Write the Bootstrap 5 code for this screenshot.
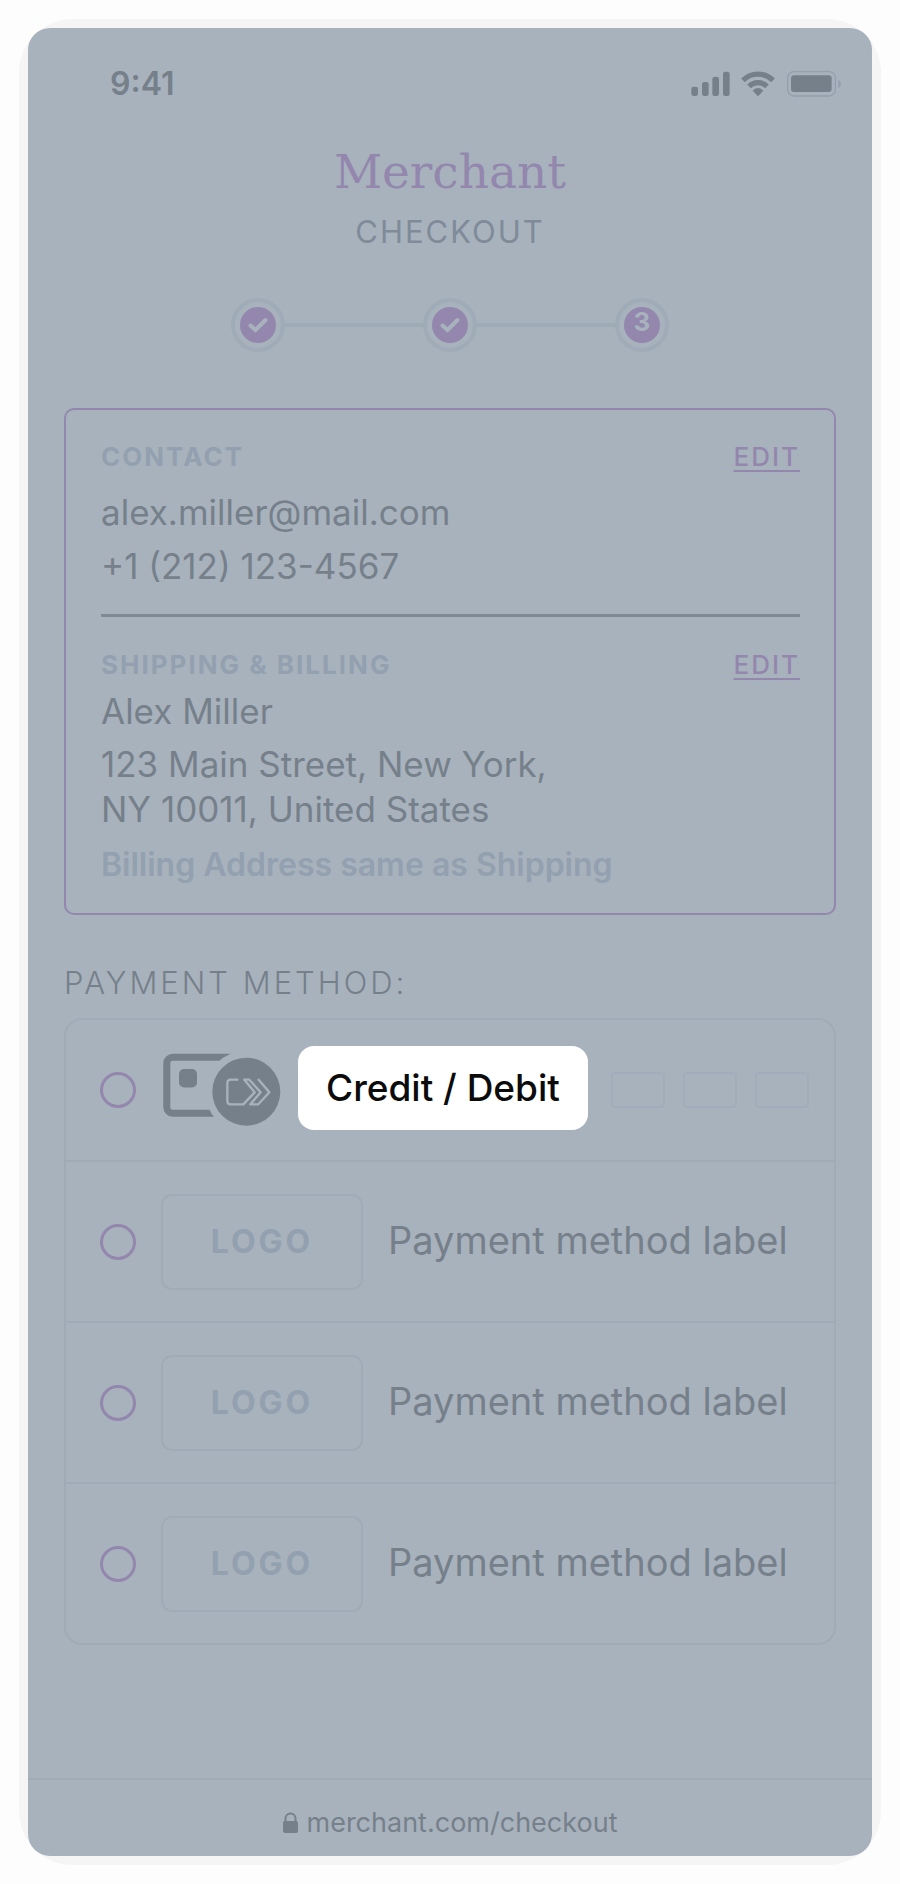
<!DOCTYPE html>
<html lang="en">
<head>
<meta charset="utf-8">
<meta name="viewport" content="width=device-width, initial-scale=1">
<title>Merchant checkout</title>
<link href="https://cdn.jsdelivr.net/npm/bootstrap@5.3.0/dist/css/bootstrap.min.css" rel="stylesheet">
<style>
  :root {
    --screen: #a8b2bd;
    --ink: #76808a;
    --ink-soft: #7f8b98;
    --muted: #92a0af;
    --accent: #9387ad;
    --rule: #9fabb7;
  }
  body { background: #fdfdfd; color: var(--ink); font-family: "Inter", sans-serif; padding: 19px; }
  .bezel { background: #f5f5f5; border-radius: 54px; padding: 9px; min-height: calc(100vh - 38px); }
  .screen { background: var(--screen); border-radius: 22px; }
  .status-bar { padding: 36px 30px 0 82px; font-size: 32px; line-height: 40px; font-weight: 600; }
  .brand { margin: 38px 0 8px; font: 400 47px/60px "DejaVu Serif", serif; color: var(--accent); }
  .page-title { margin: 0 0 44px; font-size: 31px; line-height: 44px; font-weight: 400; letter-spacing: 2px; color: var(--ink-soft); }

  .stepper { width: 100%; max-width: 438px; margin-bottom: 56px; }
  .step-ring { width: 54px; height: 54px; border: 4px solid var(--rule); border-radius: 50%; padding: 5px; }
  .step-dot { width: 36px; height: 36px; border-radius: 50%; background: var(--accent); color: var(--screen); font-size: 26px; line-height: 30px; font-weight: 700; text-align: center; }
  .step-line { height: 4px; background: var(--rule); }

  .content { padding: 0 36px; }
  .summary { border: 2px solid var(--accent); border-radius: 10px; padding: 31px 34px 28px 35px; }
  .eyebrow, .edit-link { font-size: 26px; line-height: 32px; letter-spacing: 2px; margin: 0; }
  .eyebrow { font-weight: 700; color: var(--muted); }
  .edit-link { font-weight: 500; color: var(--accent); text-underline-offset: 4px; text-decoration-thickness: 2px; }
  .edit-link:hover { color: var(--ink); }
  .detail { margin: 0; font-size: 35px; line-height: 45px; }
  .detail-tall { line-height: 54px; }
  .divider { margin: 21px 0 32px; border: 0; border-top: 3px solid #808a95; opacity: 1; }
  .same-note { margin: 13px 0 0; font-size: 32px; line-height: 40px; font-weight: 600; color: var(--muted); }

  .method-title { margin: 48px 0 15px; font-size: 31px; line-height: 40px; font-weight: 300; letter-spacing: 3px; color: var(--ink); }
  .methods { border: 2px solid var(--rule); border-radius: 18px; }
  .method { min-height: 161px; padding: 0 25px 0 34px; gap: 25px; }
  .method + .method { border-top: 2px solid var(--rule); }
  .method:first-child { min-height: 140px; }
  .method-radio { appearance: none; flex: none; width: 36px; height: 36px; margin: 0; border: 3px solid var(--accent); border-radius: 50%; background: transparent; }
  .method-radio:checked { box-shadow: inset 0 0 0 8px var(--screen); background: var(--accent); }
  .method-name { margin-bottom: 4px; font-size: 38px; line-height: 48px; }
  .spotlight { background: #fff; color: #0b0b0b; border-radius: 16px; padding: 18px 28px; font-size: 37px; font-weight: 500; }
  .logo-box { width: 202px; height: 96px; border: 2px solid var(--rule); border-radius: 11px; font-size: 32px; font-weight: 700; letter-spacing: 3px; color: var(--muted); }
  .slot { width: 54px; height: 36px; border: 2px solid #a1adba; border-radius: 4px; }
  .slots { gap: 18px; }

  .url-bar { border-top: 2px solid var(--rule); padding: 23px 0 13px; font-size: 27px; line-height: 40px; gap: 9px; }
</style>
</head>
<body>
<div class="bezel d-flex">
  <div class="screen d-flex flex-column flex-grow-1">
    <header>
      <div class="status-bar d-flex justify-content-between align-items-center">
        <span>9:41</span>
        <svg width="152" height="28" viewBox="720 207 456 84" role="img" aria-label="Signal, Wi-Fi, battery">
          <g fill="#76808a">
            <rect x="724" y="257" width="20" height="28" rx="7"/>
            <rect x="756" y="243" width="20" height="42" rx="7"/>
            <rect x="787" y="227" width="20" height="58" rx="7"/>
            <rect x="819" y="212" width="20" height="73" rx="7"/>
            <path d="M924 285l-15-16q15-14 30 0z" stroke="#76808a" stroke-width="2" stroke-linejoin="round"/>
            <rect x="1023" y="223" width="122" height="50" rx="9"/>
          </g>
          <g fill="none" stroke="#76808a" stroke-width="16">
            <path d="M879 238a64 64 0 0 1 90 0"/>
            <path d="M897 256a38 38 0 0 1 54 0"/>
          </g>
          <rect x="1013" y="212" width="143" height="73" rx="19" fill="none" stroke="#929fae" stroke-width="4"/>
          <path d="M1165 237q8 3 8 12t-8 12z" fill="#929fae"/>
        </svg>
      </div>
      <p class="brand text-center">Merchant</p>
      <h1 class="page-title text-center">CHECKOUT</h1>
    </header>

    <div class="stepper d-flex align-items-center mx-auto">
      <div class="step-ring"><div class="step-dot">
        <svg class="d-block" width="36" height="36" viewBox="0 0 36 36" role="img" aria-label="Done"><path d="M10.500 18.500l5 4.500L25.500 13" fill="none" stroke="#a8b2bd" stroke-width="4" stroke-linecap="round"/></svg>
      </div></div>
      <div class="step-line flex-grow-1"></div>
      <div class="step-ring"><div class="step-dot">
        <svg class="d-block" width="36" height="36" viewBox="0 0 36 36" role="img" aria-label="Done"><path d="M10.500 18.500l5 4.500L25.500 13" fill="none" stroke="#a8b2bd" stroke-width="4" stroke-linecap="round"/></svg>
      </div></div>
      <div class="step-line flex-grow-1"></div>
      <div class="step-ring"><div class="step-dot">3</div></div>
    </div>

    <main class="content">
      <section class="summary">
        <div class="d-flex justify-content-between">
          <h2 class="eyebrow">CONTACT</h2>
          <a class="edit-link" href="#contact">EDIT</a>
        </div>
        <div class="mt-2 pt-1">
          <p class="detail detail-tall">alex.miller@mail.com</p>
          <p class="detail detail-tall">+1 (212) 123-4567</p>
        </div>
        <hr class="divider">
        <div class="d-flex justify-content-between">
          <h2 class="eyebrow">SHIPPING &amp; BILLING</h2>
          <a class="edit-link" href="#shipping">EDIT</a>
        </div>
        <p class="detail mt-2">Alex Miller</p>
        <p class="detail mt-2">123 Main Street, New York,<br>NY 10011, United States</p>
        <p class="same-note">Billing Address same as Shipping</p>
      </section>

      <h2 class="method-title">PAYMENT METHOD:</h2>
      <form class="methods">
        <div class="method d-flex align-items-center">
          <input class="method-radio" type="radio" name="method" id="m1">
          <div class="d-flex align-items-center gap-3 flex-grow-1">
            <svg class="flex-shrink-0" width="121" height="84" viewBox="0 0 121 84" aria-hidden="true">
              <mask id="cut"><rect width="121" height="84" fill="#fff"/><circle cx="85.300" cy="43.700" r="41" fill="#000"/></mask>
              <g mask="url(#cut)">
                <rect x="5.800" y="9.200" width="80" height="56" rx="6" fill="none" stroke="#76808a" stroke-width="7"/>
              </g>
              <rect x="18" y="21" width="18" height="18.500" rx="5" fill="#76808a"/>
              <circle cx="85.300" cy="43.700" r="34" fill="#76808a"/>
              <g transform="translate(-111 -98) scale(.33333)" fill="none" stroke="#a8b2bd" stroke-width="7" stroke-linecap="round" stroke-linejoin="round">
                <path d="M562 389H542Q532 389 532 399V453Q532 463 542 463H580L614 427L583 389H598L632 427L601 463H625L658 427L626 389"/>
              </g>
            </svg>
            <label class="method-name spotlight text-nowrap" for="m1">Credit / Debit</label>
            <div class="slots d-flex ms-auto">
              <span class="slot"></span><span class="slot"></span><span class="slot"></span>
            </div>
          </div>
        </div>
        <div class="method d-flex align-items-center">
          <input class="method-radio" type="radio" name="method" id="m2">
          <span class="logo-box d-flex flex-shrink-0 align-items-center justify-content-center">LOGO</span>
          <label class="method-name" for="m2">Payment method label</label>
        </div>
        <div class="method d-flex align-items-center">
          <input class="method-radio" type="radio" name="method" id="m3">
          <span class="logo-box d-flex flex-shrink-0 align-items-center justify-content-center">LOGO</span>
          <label class="method-name" for="m3">Payment method label</label>
        </div>
        <div class="method d-flex align-items-center">
          <input class="method-radio" type="radio" name="method" id="m4">
          <span class="logo-box d-flex flex-shrink-0 align-items-center justify-content-center">LOGO</span>
          <label class="method-name" for="m4">Payment method label</label>
        </div>
      </form>
    </main>

    <footer class="url-bar d-flex justify-content-center align-items-center mt-auto">
      <svg width="15" height="22" viewBox="0 0 15 22" aria-hidden="true">
        <rect x="0" y="9" width="15" height="12" rx="2" fill="#76808a"/>
        <path d="M2.500 10V6.500a5 5 0 0 1 10 0V10" fill="none" stroke="#76808a" stroke-width="2"/>
      </svg>
      <span>merchant.com/checkout</span>
    </footer>
  </div>
</div>
<script src="https://cdn.jsdelivr.net/npm/bootstrap@5.3.0/dist/js/bootstrap.bundle.min.js"></script>
</body>
</html>
